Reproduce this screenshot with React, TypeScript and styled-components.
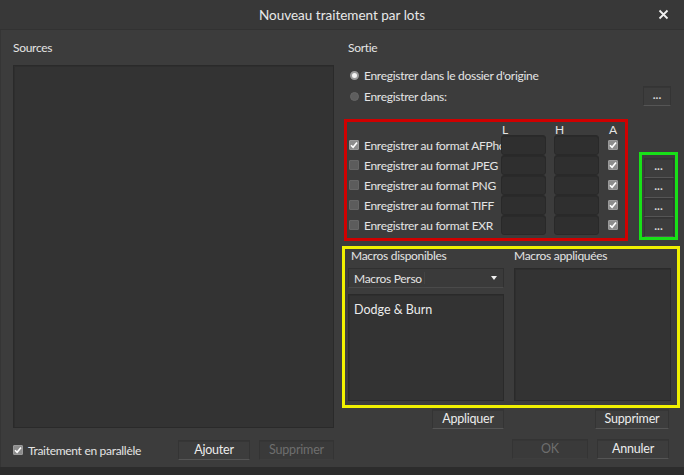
import React from "react";
import styled, { createGlobalStyle, css } from "styled-components";

const Global = createGlobalStyle`
  html, body { margin: 0; padding: 0; background: #2b2b2b; }
  body { font-family: Lato, "Noto Sans", sans-serif; font-size: 12px; letter-spacing: -0.3px; color: #e4e4e4; }
  * { box-sizing: border-box; }
`;

const Dialog = styled.div`
  width: 684px;
  height: 475px;
  display: flex;
  flex-direction: column;
  background: #3c3c3c;
  overflow: hidden;
`;

const TitleBar = styled.div`
  height: 30px;
  flex: none;
  display: flex;
  align-items: center;
  justify-content: center;
  position: relative;
  background: #383838;
  border-bottom: 1px solid #323232;
  font-size: 13.5px;
  letter-spacing: 0;
  color: #e8e8e8;
`;

const Close = styled.span`
  position: absolute;
  right: 15px;
  top: 9px;
  width: 11px;
  height: 11px;
  display: flex;
`;

const Body = styled.div`
  flex: 1;
  display: grid;
  grid-template-columns: 321px 338px;
  column-gap: 8px;
  padding: 11px 5px 7px 12px;
  border-left: 1px solid #353535;
`;

const Column = styled.div`
  display: flex;
  flex-direction: column;
  min-height: 0;
`;

const Label = styled.div<{ $indent?: number }>`
  height: 14px;
  line-height: 14px;
  padding-left: ${(p) => p.$indent ?? 0}px;
  white-space: nowrap;
`;

const ListBox = styled.div<{ $grow?: boolean; $h?: number }>`
  background: #333333;
  border: 1px solid #2a2a2a;
  box-shadow: inset 0 1px 0 #2e2e2e, inset 1px 0 0 #2e2e2e;
  ${(p) => (p.$grow ? css`flex: 1;` : css`height: ${p.$h}px;`)}
`;

const FootRow = styled.div<{ $top: number }>`
  display: flex;
  align-items: center;
  height: 20px;
  margin-top: ${(p) => p.$top}px;
`;

const Button = styled.button<{ $w: number; $disabled?: boolean; $ml?: number }>`
  width: ${(p) => p.$w}px;
  height: 20px;
  margin-left: ${(p) => p.$ml ?? 0}px;
  padding: 0;
  font-family: inherit;
  font-size: 12.5px;
  letter-spacing: -0.2px;
  color: ${(p) => (p.$disabled ? "#6e6e6e" : "#ececec")};
  background: ${(p) => (p.$disabled ? "#3a3a3a" : "#3d3d3d")};
  border: 1px solid #343434;
  border-bottom-color: ${(p) => (p.$disabled ? "#3e3e3e" : "#555")};
  box-shadow: inset 0 1px 0 #363636;
  display: flex;
  align-items: center;
  justify-content: center;
  line-height: 1;
`;

const Dots = styled(Button)`
  font-size: 12px;
  font-weight: 700;
  letter-spacing: 0;
  padding-bottom: 3px;
  color: #d8d8d8;
`;

const Spacer = styled.div`
  flex: 1;
`;

const Check = styled.span<{ $on?: boolean }>`
  width: 10px;
  height: 10px;
  flex: none;
  display: inline-flex;
  align-items: center;
  justify-content: center;
  border-radius: 1px;
  background: ${(p) => (p.$on ? "#8c8c8c" : "#5c5c5c")};
  border: 1px solid ${(p) => (p.$on ? "#9a9a9a" : "#666")};
`;

const CheckLabel = styled.span`
  margin-left: 5px;
  white-space: nowrap;
`;

const Radio = styled.span<{ $on?: boolean }>`
  width: 9px;
  height: 9px;
  border-radius: 50%;
  flex: none;
  background: ${(p) => (p.$on ? "#f4f4f4" : "#5e5e5e")};
  border: ${(p) => (p.$on ? "2px solid #9a9a9a" : "1px solid #666")};
`;

const RadioRow = styled.div<{ $top?: number }>`
  display: flex;
  align-items: center;
  height: 20px;
  padding-left: 8px;
  margin-top: ${(p) => p.$top ?? 0}px;
  & > span + span { margin-left: 5px; }
`;

const FormatArea = styled.div`
  display: flex;
  align-items: flex-end;
  margin-top: 13px;
  margin-left: 2px;
`;

const RedBox = styled.div`
  width: 284px;
  height: 122px;
  border: 3px solid #d00000;
  display: grid;
  grid-template-columns: 152px 45px 8px 45px 9px 14px;
  grid-template-rows: 13px;
  grid-auto-rows: 20px;
  padding: 0 0 0 2px;
  align-items: center;
`;

const HeadCell = styled.div<{ $col: number }>`
  grid-column: ${(p) => p.$col};
  line-height: 13px;
  padding-left: 1px;
  padding-top: 2px;
`;

const RowLabel = styled.div`
  grid-column: 1;
  display: flex;
  align-items: center;
  overflow: hidden;
  white-space: nowrap;
`;

const SizeInput = styled.div<{ $col: number }>`
  grid-column: ${(p) => p.$col};
  height: 20px;
  background: #2f2f2f;
  border: 1px solid #292929;
  border-radius: 3px;
  box-shadow: inset 0 1px 0 #2a2a2a;
`;

const ACell = styled.div`
  grid-column: 6;
  display: flex;
  align-items: center;
`;

const GreenBox = styled.div`
  margin-left: 11px;
  margin-bottom: 1px;
  width: 39px;
  height: 88px;
  border: 3px solid #18e018;
  display: flex;
  flex-direction: column;
  align-items: center;
  padding-top: 3px;
`;

const YellowBox = styled.div`
  margin-top: 5px;
  height: 162px;
  border: 3px solid #f0f000;
  display: grid;
  grid-template-columns: 156px 157px;
  column-gap: 10px;
  padding: 0 0 0 3px;
`;

const MacroCol = styled.div`
  display: flex;
  flex-direction: column;
`;

const Select = styled.div`
  margin-top: 5px;
  height: 20px;
  display: flex;
  align-items: center;
  padding: 0 6px 0 5px;
  background: #3a3a3a;
  border: 1px solid #303030;
  border-bottom-color: #4a4a4a;
  position: relative;
`;

const SelectText = styled.span`
  flex: 1;
`;

const SelectSep = styled.span`
  position: absolute;
  left: 75px;
  top: 3px;
  bottom: 3px;
  width: 1px;
  background: #444;
`;

const Caret = styled.span`
  width: 0;
  height: 0;
  border-left: 3.5px solid transparent;
  border-right: 3.5px solid transparent;
  border-top: 4px solid #f0f0f0;
`;

const MacroItem = styled.div`
  font-size: 12.5px;
  letter-spacing: 0;
  padding: 7px 0 0 5px;
  color: #ececec;
`;

const MacroFoot = styled.div`
  display: grid;
  grid-template-columns: 156px 157px;
  column-gap: 10px;
  padding-left: 6px;
  height: 20px;
  margin-top: 1px;
  & > * { justify-self: end; }
`;

const BottomRight = styled.div`
  display: flex;
  justify-content: flex-end;
  gap: 9px;
  margin-top: 10px;
  padding-right: 11px;
`;

const CheckMark = () => (
  <svg width="8" height="8" viewBox="0 0 8 8">
    <path d="M1 4.2 L3.1 6.3 L7 1.4" stroke="#fff" strokeWidth="1.6" fill="none" />
  </svg>
);

const formats = ["AFPhoto", "JPEG", "PNG", "TIFF", "EXR"];

export default function App() {
  return (
    <>
      <Global />
      <Dialog>
        <TitleBar>
          Nouveau traitement par lots
          <Close>
            <svg width="11" height="11" viewBox="0 0 11 11">
              <path d="M1.5 1.5 L9.5 9.5 M9.5 1.5 L1.5 9.5" stroke="#f0f0f0" strokeWidth="1.8" />
            </svg>
          </Close>
        </TitleBar>
        <Body>
          <Column>
            <Label>Sources</Label>
            <div style={{ height: 10 }} />
            <ListBox $grow />
            <FootRow $top={12}>
              <Check $on>
                <CheckMark />
              </Check>
              <CheckLabel>Traitement en parallèle</CheckLabel>
              <Spacer />
              <Button $w={72}>Ajouter</Button>
              <Button $w={75} $ml={9} $disabled>
                Supprimer
              </Button>
            </FootRow>
          </Column>
          <Column>
            <Label $indent={6}>Sortie</Label>
            <RadioRow $top={10}>
              <Radio $on />
              <span>Enregistrer dans le dossier d'origine</span>
            </RadioRow>
            <RadioRow $top={1}>
              <Radio />
              <span>Enregistrer dans:</span>
              <Spacer />
              <Dots $w={28} style={{ marginRight: 9 }}>...</Dots>
            </RadioRow>
            <FormatArea>
              <RedBox>
                <HeadCell $col={2}>L</HeadCell>
                <HeadCell $col={4}>H</HeadCell>
                <HeadCell $col={6}>A</HeadCell>
                {formats.map((f, i) => (
                  <React.Fragment key={f}>
                    <RowLabel>
                      <Check $on={i === 0}>{i === 0 && <CheckMark />}</Check>
                      <CheckLabel>Enregistrer au format {f}</CheckLabel>
                    </RowLabel>
                    <SizeInput $col={2} />
                    <SizeInput $col={4} />
                    <ACell>
                      <Check $on>
                        <CheckMark />
                      </Check>
                    </ACell>
                  </React.Fragment>
                ))}
              </RedBox>
              <GreenBox>
                {[0, 1, 2, 3].map((i) => (
                  <Dots key={i} $w={30}>
                    ...
                  </Dots>
                ))}
              </GreenBox>
            </FormatArea>
            <YellowBox>
              <MacroCol>
                <Label $indent={3}>Macros disponibles</Label>
                <Select>
                  <SelectText>Macros Perso</SelectText>
                  <SelectSep />
                  <Caret />
                </Select>
                <ListBox $h={107} style={{ marginTop: 6 }}>
                  <MacroItem>Dodge &amp; Burn</MacroItem>
                </ListBox>
              </MacroCol>
              <MacroCol>
                <Label>Macros appliquées</Label>
                <ListBox $h={133} style={{ marginTop: 5 }} />
              </MacroCol>
            </YellowBox>
            <MacroFoot>
              <Button $w={72}>Appliquer</Button>
              <Button $w={74} style={{ marginRight: 2 }}>Supprimer</Button>
            </MacroFoot>
            <BottomRight>
              <Button $w={76} $disabled>
                OK
              </Button>
              <Button $w={72}>Annuler</Button>
            </BottomRight>
          </Column>
        </Body>
        <div style={{ height: 8, background: "#2c2c2c", flex: "none" }} />
      </Dialog>
    </>
  );
}
